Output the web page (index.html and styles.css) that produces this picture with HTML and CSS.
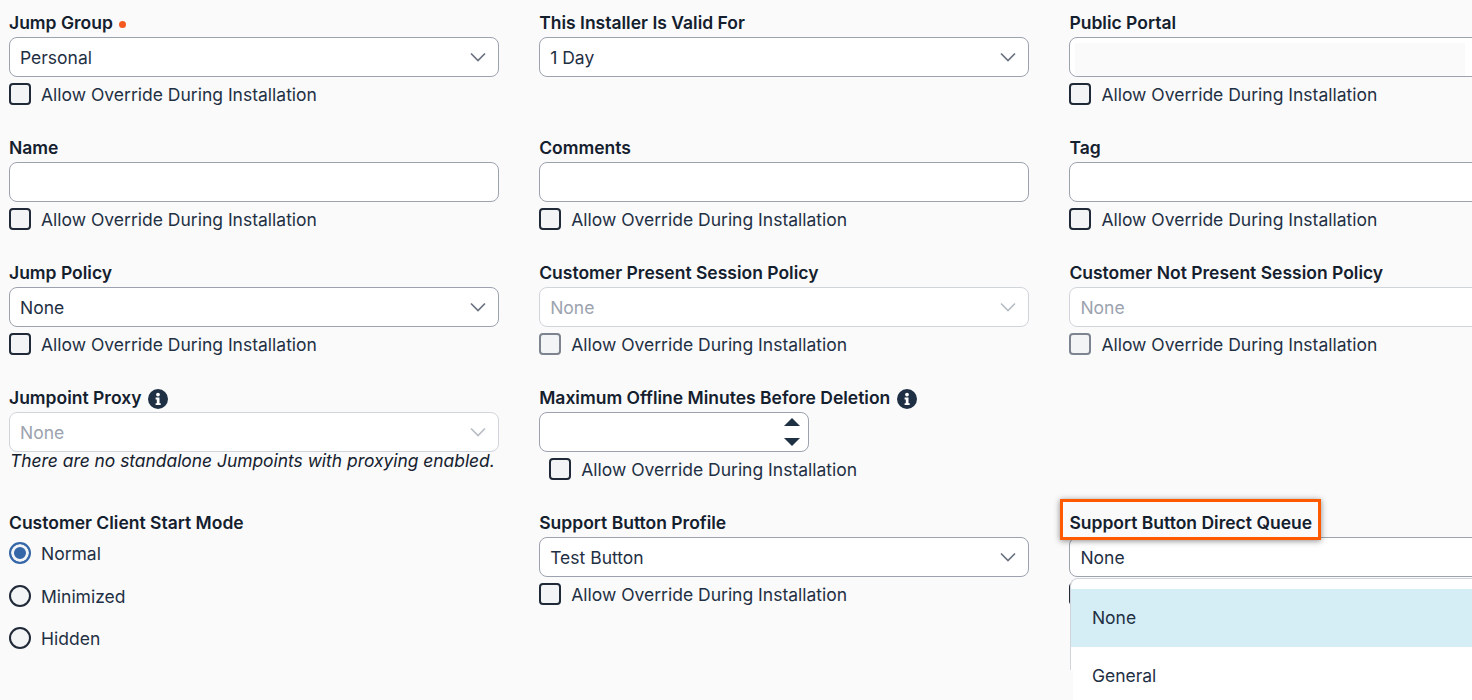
FILE: index.html
```html
<!DOCTYPE html>
<html lang="en">
<head>
<meta charset="utf-8">
<title>Jump Client Installer</title>
<link rel="stylesheet" href="styles.css">
</head>
<body>
<svg class="defs" width="0" height="0" aria-hidden="true">
  <symbol id="chev" viewBox="0 0 16 10"><path d="M1 1.5 8 8.5 15 1.5" fill="none" stroke="currentColor" stroke-width="1.7"/></symbol>
  <symbol id="info" viewBox="0 0 20 20"><circle cx="10" cy="10" r="10" fill="#1f3044"/><circle cx="10" cy="5.6" r="1.9" fill="#fff"/><path d="M7.6 8.6h3.9v5.6h1.2v1.9H7.6v-1.9h1.2v-3.7H7.6z" fill="#fff"/></symbol>
</svg>
<main class="form">
  <div class="field">
    <div class="label">Jump Group <span class="req"></span></div>
    <div class="select"><span>Personal</span><svg class="chev"><use href="#chev"/></svg></div>
    <label class="check"><span class="box"></span>Allow Override During Installation</label>
  </div>
  <div class="field">
    <div class="label">This Installer Is Valid For</div>
    <div class="select"><span>1 Day</span><svg class="chev"><use href="#chev"/></svg></div>
  </div>
  <div class="field">
    <div class="label">Public Portal</div>
    <div class="select portal"><div class="portal-fill"></div></div>
    <label class="check"><span class="box"></span>Allow Override During Installation</label>
  </div>

  <div class="field">
    <div class="label">Name</div>
    <div class="select"></div>
    <label class="check"><span class="box"></span>Allow Override During Installation</label>
  </div>
  <div class="field">
    <div class="label">Comments</div>
    <div class="select"></div>
    <label class="check"><span class="box"></span>Allow Override During Installation</label>
  </div>
  <div class="field">
    <div class="label">Tag</div>
    <div class="select"></div>
    <label class="check"><span class="box"></span>Allow Override During Installation</label>
  </div>

  <div class="field">
    <div class="label">Jump Policy</div>
    <div class="select"><span>None</span><svg class="chev"><use href="#chev"/></svg></div>
    <label class="check"><span class="box"></span>Allow Override During Installation</label>
  </div>
  <div class="field">
    <div class="label">Customer Present Session Policy</div>
    <div class="select disabled"><span>None</span><svg class="chev"><use href="#chev"/></svg></div>
    <label class="check off"><span class="box"></span>Allow Override During Installation</label>
  </div>
  <div class="field">
    <div class="label">Customer Not Present Session Policy</div>
    <div class="select disabled"><span>None</span><svg class="chev"><use href="#chev"/></svg></div>
    <label class="check off"><span class="box"></span>Allow Override During Installation</label>
  </div>

  <div class="field">
    <div class="label">Jumpoint Proxy <svg class="info"><use href="#info"/></svg></div>
    <div class="select disabled"><span>None</span><svg class="chev"><use href="#chev"/></svg></div>
    <div class="hint">There are no standalone Jumpoints with proxying enabled.</div>
  </div>
  <div class="field">
    <div class="label">Maximum Offline Minutes Before Deletion <svg class="info"><use href="#info"/></svg></div>
    <div class="select number">
      <div class="spin"><span class="up"></span><span class="down"></span></div>
    </div>
    <label class="check indent"><span class="box"></span>Allow Override During Installation</label>
  </div>
  <div class="field"></div>

  <div class="field">
    <div class="label">Customer Client Start Mode</div>
    <div class="radios">
      <label class="radio on"><span class="dot"></span>Normal</label>
      <label class="radio"><span class="dot"></span>Minimized</label>
      <label class="radio"><span class="dot"></span>Hidden</label>
    </div>
  </div>
  <div class="field">
    <div class="label">Support Button Profile</div>
    <div class="select"><span>Test Button</span><svg class="chev"><use href="#chev"/></svg></div>
    <label class="check"><span class="box"></span>Allow Override During Installation</label>
  </div>
  <div class="field queue">
    <div class="label">Support Button Direct Queue</div>
    <div class="select"><span>None</span></div>
    <label class="check"><span class="box"></span>Allow Override During Installation</label>
    <div class="highlight"></div>
    <ul class="menu">
      <li class="active">None</li>
      <li>General</li>
    </ul>
  </div>
</main>
</body>
</html>
```

FILE: styles.css
```css
html, body {
  margin: 0;
  height: 700px;
  overflow: hidden;
  background: #fafafa;
}
body {
  font-family: Inter, "Liberation Sans", sans-serif;
  font-size: 17.5px;
  color: #1f3044;
}
.defs { position: absolute; }
.form {
  display: grid;
  grid-template-columns: 490px 490px 490px;
  grid-auto-rows: 125px;
  column-gap: 40.2px;
  padding: 13px 0 0 9px;
  width: 1600px;
}
.field { position: relative; min-width: 0; }
.label {
  display: flex;
  align-items: center;
  height: 20px;
  margin-bottom: 4px;
  font-weight: 600;
  line-height: 20px;
  color: #14202e;
  white-space: nowrap;
}
.req {
  width: 7px;
  height: 7px;
  margin-left: 6px;
  margin-top: 2px;
  border-radius: 50%;
  background: #f4591f;
}
.info { width: 20px; height: 20px; margin-left: 7px; margin-top: 2px; }
.select {
  box-sizing: border-box;
  display: flex;
  align-items: center;
  justify-content: space-between;
  height: 40px;
  padding: 0 12px 0 10px;
  background: #fff;
  border: 1px solid #9ca3af;
  border-radius: 8px;
}
.chev { width: 16px; height: 10px; color: #6b7280; }
.select.disabled { border-color: #d1d5db; color: #9ca3af; }
.select.disabled .chev { color: #b9bec6; }
.portal { padding: 5px 0 0 5px; align-items: stretch; justify-content: flex-start; }
.portal-fill { width: 390px; height: 33px; background: #fafafa; }
.number { width: 270px; padding-right: 8px; justify-content: flex-end; }
.spin { display: flex; flex-direction: column; gap: 12px; }
.up, .down {
  width: 0;
  height: 0;
  border-left: 8.5px solid transparent;
  border-right: 8.5px solid transparent;
}
.up { border-bottom: 8.5px solid #1f3044; }
.down { border-top: 8.5px solid #1f3044; }
.check, .radio {
  display: flex;
  align-items: flex-start;
  line-height: 24px;
  white-space: nowrap;
}
.check { margin-top: 6px; }
.box, .dot {
  box-sizing: border-box;
  flex: none;
  width: 22px;
  height: 22px;
  margin-right: 10px;
  background: #f3f4f6;
  border: 2px solid #1f2937;
}
.box { border-radius: 4px; }
.check.off .box { border-color: #7d8490; background: #f3f4f6; }
.check.indent { margin-left: 10px; }
.hint { font-size: 17.4px; font-style: italic; line-height: 20px; margin-top: -1px; padding-left: 1px; color: #14202e; white-space: nowrap; }
.radios { display: flex; flex-direction: column; gap: 18.5px; margin-top: 9px; }
.dot { border-radius: 50%; }
.radio.on .dot {
  border-color: #3466a8;
  background: #3466a8;
  box-shadow: inset 0 0 0 3px #f3f4f6;
}
.highlight {
  position: absolute;
  left: -9px;
  top: -14px;
  width: 261px;
  height: 41px;
  box-sizing: border-box;
  border: 3px solid #ff5a00;
  box-shadow: 0 1px 6px rgba(0, 0, 0, 0.45);
}
.menu {
  position: absolute;
  left: 1px;
  top: 65px;
  width: 500px;
  margin: 0;
  padding: 10px 0 0;
  list-style: none;
  background: #fff;
  border-left: 1px solid #d1d5db;
  border-top: 1px solid #d1d5db;
  border-radius: 8px 0 0 0;
}
.menu::after {
  content: "";
  position: absolute;
  left: -1px;
  bottom: 0;
  width: 3px;
  height: 35px;
  background: #fafafa;
}
.menu li {
  height: 58px;
  padding-left: 20.5px;
  line-height: 58px;
}
.menu li.active { background: #d5eef6; }
```
